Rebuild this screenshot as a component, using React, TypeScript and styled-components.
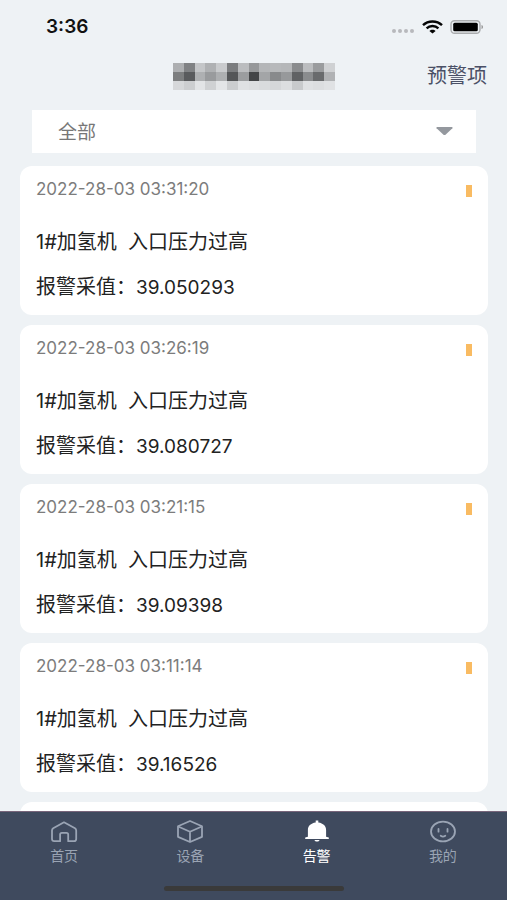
import React from "react";
import styled, { createGlobalStyle } from "styled-components";

const GlobalStyle = createGlobalStyle`
  * { box-sizing: border-box; }
  body {
    margin: 0;
    background: #eef2f5;
    font-family: Inter, "Noto Sans CJK SC", sans-serif;
  }
`;

const Screen = styled.div`
  display: flex;
  flex-direction: column;
  height: 100vh;
  overflow: hidden;
  background: #eef2f5;
`;

const StatusBar = styled.div`
  display: flex;
  flex: none;
  align-items: center;
  justify-content: space-between;
  height: 54px;
  padding: 0 23px 0 46px;
`;

const Clock = styled.time`
  font-size: 19px;
  line-height: 24px;
  font-weight: 600;
  color: #111;
`;

const StatusIcons = styled.div`
  display: flex;
  align-items: center;
  gap: 7px;
`;

const Header = styled.header`
  display: grid;
  flex: none;
  grid-template-columns: 1fr auto 1fr;
  align-items: center;
  height: 44px;
  padding: 0 20px;
`;

const Title = styled.h1`
  grid-column: 2;
  margin: 0;
  line-height: 0;
`;

const HeaderLink = styled.a`
  justify-self: end;
  font-size: 20px;
  line-height: 24px;
  color: #4a5066;
  text-decoration: none;
`;

const Filter = styled.div`
  display: grid;
  flex: none;
  align-items: center;
  margin: 12px 31px 13px 32px;
  background: #fff;

  > * {
    grid-area: 1 / 1;
  }

  > svg {
    justify-self: end;
    margin-right: 23px;
    pointer-events: none;
  }
`;

const FilterSelect = styled.select`
  appearance: none;
  width: 100%;
  height: 43px;
  padding: 2px 48px 0 26px;
  border: 0;
  border-radius: 0;
  background: transparent;
  font-family: inherit;
  font-size: 19px;
  color: #777;
`;

const List = styled.ul`
  display: flex;
  flex: 1;
  flex-direction: column;
  gap: 10px;
  min-height: 0;
  margin: 0;
  padding: 0 19px 0 20px;
  overflow: hidden;
  list-style: none;
`;

const Card = styled.li`
  flex: none;
  padding: 11px 16px 14px;
  border-radius: 12px;
  background: #fff;
`;

const CardTop = styled.div`
  display: flex;
  align-items: center;
  justify-content: space-between;
  height: 24px;
  margin-bottom: 27px;
`;

const Stamp = styled.time`
  font-size: 17px;
  line-height: 24px;
  color: #7c7c7c;
`;

const Level = styled.span`
  width: 6px;
  height: 12px;
  margin-top: 4px;
  background: #f9bb62;
`;

const Line = styled.p`
  margin: 0;
  font-size: 20px;
  line-height: 28px;
  color: #222;
  white-space: pre;

  & + & {
    margin-top: 17px;
  }
`;

const Value = styled.span`
  font-size: 19px;
  line-height: 20px;
`;

const TabBar = styled.nav`
  flex: none;
  padding: 8px 1px 9px;
  border-top: 1px solid #77657a;
  background: #3f4a5e;
`;

const Tabs = styled.div`
  display: grid;
  grid-template-columns: repeat(4, 1fr);
`;

const Tab = styled.button<{ $active?: boolean }>`
  display: flex;
  flex-direction: column;
  align-items: center;
  gap: 2px;
  padding: 0;
  border: 0;
  background: transparent;
  font-family: inherit;
  font-size: 14px;
  line-height: 20px;
  color: ${(p) => (p.$active ? "#fff" : "#9aa4b4")};
`;

const HomeIndicator = styled.div`
  width: 180px;
  height: 5px;
  margin: 20px auto 0;
  border-radius: 3px;
  background: #3a3a3a;
`;

const mosaic = [
  ["adafb1", "808284", "c4c6c8", "afb1b3", "c9cbcd", "7b7d7f", "bbbdbf", "96989a", "b4b6b8", "b7b9bb", "b5b7b9", "8a8c8e", "bbbdbf", "9a9c9e", "cfd1d3"],
  ["7c7e7f", "595b5d", "aeb0b2", "999b9d", "adafb1", "545658", "9b9d9f", "434547", "a3a5a7", "888a8c", "97999b", "606264", "8a8c8e", "696b6d", "b0b2b4"],
  ["d6d8da", "ccced0", "e2e4e6", "cfd1d3", "e3e5e7", "cbcdcf", "dfe1e3", "dcdee0", "d9dbdd", "d5d7d9", "dcdee0", "c8cacc", "dfe1e3", "dcdee0", "e0e2e4"],
];

const Mosaic = () => (
  <svg width="162" height="27" viewBox="0 0 15 3" preserveAspectRatio="none" shapeRendering="crispEdges" aria-hidden="true">
    {mosaic.map((row, y) =>
      row.map((c, x) => <rect key={`${x}-${y}`} x={x} y={y} width="1" height="1" fill={`#${c}`} />)
    )}
  </svg>
);

const Signal = () => (
  <svg width="23" height="14" viewBox="0 0 23 14" fill="#b7b9bc" aria-hidden="true">
    <circle cx="2" cy="11" r="2" />
    <circle cx="8" cy="11" r="2" />
    <circle cx="14" cy="11" r="2" />
    <circle cx="20" cy="11" r="2" />
  </svg>
);

const Wifi = () => (
  <svg width="21" height="14" viewBox="0 0 21 14" fill="none" stroke="#050505" strokeWidth="2.4" aria-hidden="true">
    <path d="M1 5.200C6.200.200 14.800.200 20 5.200" />
    <path d="M4.600 8.300C7.800 5.200 13.200 5.200 16.400 8.300" />
    <path d="M10.500 13.600 7.400 11c1.600-1.700 4.600-1.700 6.200 0Z" fill="#050505" stroke="none" />
  </svg>
);

const Battery = () => (
  <svg width="34" height="14" viewBox="0 0 34 14" aria-hidden="true">
    <rect x="1" y=".7" width="29" height="12.6" rx="3.5" fill="none" stroke="#aaacae" strokeWidth="1.4" />
    <rect x="3.2" y="2.7" width="24.6" height="8.6" rx="1.5" fill="#000" />
    <path d="M31.500 5c2 .6 2 3.400 0 4Z" fill="#999" />
  </svg>
);

const HomeIcon = () => (
  <svg width="28" height="24" viewBox="0 0 28 24" fill="none" stroke="currentColor" strokeWidth="1.8" strokeLinejoin="round" aria-hidden="true">
    <path d="M14 2.300 25 8.300Q26.200 9.100 26.200 10.500V19Q26.200 21.200 24 21.200H18.200V14.500Q18.200 12.800 16.500 12.800H11.800Q10.100 12.800 10.100 14.500V21.200H4.200Q2 21.200 2 19V10.500Q2 9.100 3.200 8.300Z" />
  </svg>
);

const CubeIcon = () => (
  <svg width="28" height="24" viewBox="0 0 28 24" fill="none" stroke="currentColor" strokeWidth="1.8" strokeLinejoin="round" aria-hidden="true">
    <path d="M14 1 26 6.300V16.800L14 22 2 16.800V6.300Z" />
    <path d="M2.200 6.500 14 11.800 25.800 6.500M14 11.800V22" />
  </svg>
);

const BellIcon = () => (
  <svg width="28" height="24" viewBox="0 0 28 24" fill="currentColor" aria-hidden="true">
    <path d="M12.700.6h2.600v2c5 .6 7.800 3.700 7.800 7.500v6.600l2.700.7v1.500H2.200v-1.500l2.700-.7v-6.600c0-3.800 2.800-6.900 7.800-7.500Z" />
    <path d="M11.500 20h5c-.4 2-4.600 2-5 0Z" />
  </svg>
);

const FaceIcon = () => (
  <svg width="28" height="24" viewBox="0 0 28 24" fill="none" stroke="currentColor" strokeWidth="1.8" strokeLinecap="round" aria-hidden="true">
    <ellipse cx="14" cy="11.5" rx="12" ry="9.8" />
    <path d="M9.500 9v2.700M18.500 9v2.700M11.700 15.800q2.300 1.500 4.600 0" />
  </svg>
);

const alarms = [
  { time: "2022-28-03 03:31:20", value: "39.050293" },
  { time: "2022-28-03 03:26:19", value: "39.080727" },
  { time: "2022-28-03 03:21:15", value: "39.09398" },
  { time: "2022-28-03 03:11:14", value: "39.16526" },
];

const tabs = [
  { label: "首页", Icon: HomeIcon },
  { label: "设备", Icon: CubeIcon },
  { label: "告警", Icon: BellIcon, active: true },
  { label: "我的", Icon: FaceIcon },
];

export default function App() {
  return (
    <Screen lang="zh-CN">
      <GlobalStyle />
      <StatusBar>
        <Clock>3:36</Clock>
        <StatusIcons>
          <Signal />
          <Wifi />
          <Battery />
        </StatusIcons>
      </StatusBar>
      <Header>
        <Title>
          <Mosaic />
        </Title>
        <HeaderLink href="#items">预警项</HeaderLink>
      </Header>
      <Filter>
        <FilterSelect aria-label="全部">
          <option>全部</option>
        </FilterSelect>
        <svg width="17" height="9" viewBox="0 0 17 9" aria-hidden="true">
          <path d="M1 0h15q1 .3.400 1.200L9.800 7.500q-1.300 1-2.600 0L.6 1.200Q0 .3 1 0Z" fill="#94989e" />
        </svg>
      </Filter>
      <List>
        {alarms.map((a) => (
          <Card key={a.time}>
            <CardTop>
              <Stamp>{a.time}</Stamp>
              <Level />
            </CardTop>
            <Line>1#加氢机  入口压力过高</Line>
            <Line>
              报警采值：<Value>{a.value}</Value>
            </Line>
          </Card>
        ))}
        <Card>
          <CardTop />
        </Card>
      </List>
      <TabBar>
        <Tabs>
          {tabs.map(({ label, Icon, active }) => (
            <Tab key={label} type="button" $active={active} aria-current={active ? "page" : undefined}>
              <Icon />
              {label}
            </Tab>
          ))}
        </Tabs>
        <HomeIndicator />
      </TabBar>
    </Screen>
  );
}
